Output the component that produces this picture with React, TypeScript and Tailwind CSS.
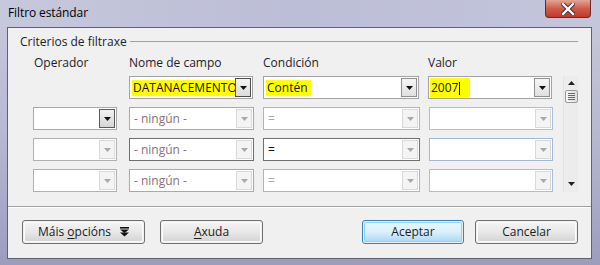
import React from "react";

type BtnKind = "light" | "dark" | "focus" | "normal";

function Arrow({ color }: { color: string }) {
  return (
    <svg width="7" height="4" viewBox="0 0 7 4">
      <path d="M0 0 H7 L3.5 4 Z" fill={color} />
    </svg>
  );
}

function Combo({
  w,
  border,
  btn,
  children,
}: {
  w: string;
  border: string;
  btn: BtnKind;
  children?: React.ReactNode;
}) {
  const btnCls =
    btn === "dark"
      ? "border-[#5b5b5b] bg-gradient-to-b from-[#f2f2f2] to-[#d6d6d6]"
      : btn === "focus"
      ? "border-[#4d4d4d] bg-gradient-to-b from-[#f4f4f4] to-[#dcdcdc]"
      : btn === "normal"
      ? "border-[#8e8f8f] bg-gradient-to-b from-[#f6f6f6] to-[#e0e0e0]"
      : "border-[#d9d9d9] bg-[#f4f4f4]";
  const arrowColor = btn === "light" ? "#a8a8a8" : "#111111";
  return (
    <div className={`${w} h-[23px] bg-white border ${border} flex items-stretch p-[1px]`}>
      <div className="flex-1 min-w-0 overflow-hidden flex items-center pl-[1px] whitespace-nowrap">
        {children}
      </div>
      <div className={`w-[16px] border flex items-center justify-center ${btnCls}`}>
        <Arrow color={arrowColor} />
      </div>
    </div>
  );
}

function WinButton({
  w,
  children,
  def,
}: {
  w: string;
  children: React.ReactNode;
  def?: boolean;
}) {
  return (
    <div
      className={`${w} h-[24px] rounded-[3px] border ${
        def ? "border-[#3c7fb1]" : "border-[#707070]"
      } p-[1px]`}
    >
      <div
        className={`w-full h-full rounded-[2px] flex items-center justify-center text-[12px] text-[#1a1a1a] ${
          def
            ? "bg-gradient-to-b from-[#eaf6fd] via-[#d9f0fc] to-[#a7d9f5] shadow-[inset_0_0_0_1px_#8ed3f7]"
            : "bg-gradient-to-b from-[#f4f4f4] via-[#e8e8e8] to-[#d3d3d3] shadow-[inset_0_0_0_1px_#fbfbfb]"
        }`}
      >
        {children}
      </div>
    </div>
  );
}

const ningun = <span className="text-[#86707c] text-[12px] pl-[2px]">- ningún -</span>;

export default function App() {
  return (
    <div
      className="w-[600px] h-[265px] flex flex-col bg-gradient-to-b from-[#c9cade] via-[#b7b8d2] to-[#9c9dbd] overflow-hidden"
      style={{ fontFamily: '"Open Sans", "Noto Sans", sans-serif' }}
    >
      {/* Title bar */}
      <div className="h-[27px] flex justify-between items-start shrink-0 bg-gradient-to-r from-[#c6c8dc] via-[#bcbdd6] to-[#c4c6dc]">
        <div className="pl-[8px] pt-[4px] text-[12px] text-black tracking-[-0.1px]">
          Filtro estándar
        </div>
        <div className="mr-[9px] w-[46px] h-[18px] rounded-b-[4px] border border-t-0 border-[#6b2a24] bg-gradient-to-b from-[#e3a493] via-[#cf5b4a] to-[#c0392b] flex items-center justify-center">
          <svg width="14" height="12" viewBox="0 0 14 12">
            <path
              d="M2 1 L12 11 M12 1 L2 11"
              stroke="#3a2a2a"
              strokeWidth="4.2"
              strokeLinecap="square"
            />
            <path
              d="M2 1 L12 11 M12 1 L2 11"
              stroke="#ffffff"
              strokeWidth="2.4"
              strokeLinecap="square"
            />
          </svg>
        </div>
      </div>

      {/* Client area */}
      <div className="ml-[7px] mr-[8px] h-[232px] border border-[#5f6275] bg-[#f0f0f0] flex flex-col text-[#1c1c2c]">
        {/* group header */}
        <div className="flex items-center h-[15px] mt-[6px] pl-[12px] pr-[13px]">
          <span className="text-[12px] leading-none">Criterios de filtraxe</span>
          <div className="flex-1 ml-[3px] h-[2px] border-t border-[#a0a0a0] border-b-white" />
        </div>

        {/* headers */}
        <div className="flex text-[12px] mt-[5px] h-[18px] items-center">
          <span className="ml-[26px] w-[95px]">Operador</span>
          <span className="w-[134px]">Nome de campo</span>
          <span className="w-[165px]">Condición</span>
          <span>Valor</span>
        </div>

        {/* rows + scrollbar */}
        <div className="flex mt-[4px]">
          <div className="flex flex-col gap-[8px] ml-[25px]">
            <div className="flex">
              <div className="w-[84px]" />
              <div className="ml-[12px]">
                <Combo w="w-[124px]" border="border-[#a3a3a3]" btn="focus">
                  <span className="bg-[#ffff00] text-[12px] text-[#2a0a00] h-[16px] leading-[16px] pl-[1px] pr-[3px]">
                    DATANACEMENTO
                  </span>
                </Combo>
              </div>
              <div className="ml-[10px]">
                <Combo w="w-[156px]" border="border-[#a3a3a3]" btn="normal">
                  <span className="bg-[#ffff00] text-[12px] text-[#1a1400] h-[16px] leading-[16px] pl-[1px] pr-[3px]">
                    Contén
                  </span>
                </Combo>
              </div>
              <div className="ml-[9px]">
                <Combo w="w-[124px]" border="border-[#a3a3a3]" btn="normal">
                  <span className="bg-[#ffff00] text-[12px] text-[#1a1400] h-[20px] leading-[20px] -ml-[3px] pl-[3px] pr-[10px]">
                    2007<span className="inline-block w-[1px] h-[13px] bg-black align-middle ml-[1px]" />
                  </span>
                </Combo>
              </div>
            </div>

            <div className="flex">
              <Combo w="w-[84px]" border="border-[#a9a9a9]" btn="dark" />
              <div className="ml-[12px]">
                <Combo w="w-[125px]" border="border-[#a9a9a9]" btn="light">
                  {ningun}
                </Combo>
              </div>
              <div className="ml-[9px]">
                <Combo w="w-[157px]" border="border-[#b4b4b4]" btn="light">
                  <span className="text-[12px] text-[#a6a6a6] pl-[2px]">=</span>
                </Combo>
              </div>
              <div className="ml-[9px]">
                <Combo w="w-[124px]" border="border-[#a9bfdc]" btn="light" />
              </div>
            </div>

            <div className="flex">
              <Combo w="w-[84px]" border="border-[#b0b0b0]" btn="light" />
              <div className="ml-[12px]">
                <Combo w="w-[125px]" border="border-[#6f6f6f]" btn="light">
                  {ningun}
                </Combo>
              </div>
              <div className="ml-[9px]">
                <Combo w="w-[157px]" border="border-[#6f6f6f]" btn="light">
                  <span className="text-[12px] text-[#111111] pl-[2px]">=</span>
                </Combo>
              </div>
              <div className="ml-[9px]">
                <Combo w="w-[124px]" border="border-[#a3b8d6]" btn="light" />
              </div>
            </div>

            <div className="flex">
              <Combo w="w-[84px]" border="border-[#b0b0b0]" btn="light" />
              <div className="ml-[12px]">
                <Combo w="w-[125px]" border="border-[#a9a9a9]" btn="light">
                  {ningun}
                </Combo>
              </div>
              <div className="ml-[9px]">
                <Combo w="w-[157px]" border="border-[#b4b4b4]" btn="light">
                  <span className="text-[12px] text-[#a6a6a6] pl-[2px]">=</span>
                </Combo>
              </div>
              <div className="ml-[9px]">
                <Combo w="w-[124px]" border="border-[#a9bfdc]" btn="light" />
              </div>
            </div>
          </div>

          {/* scrollbar */}
          <div className="ml-[10px] w-[15px] h-[116px] bg-[#ececec] border-l border-[#e4e4e4] flex flex-col items-center">
            <div className="h-[14px] flex items-center justify-center">
              <svg width="7" height="4" viewBox="0 0 7 4">
                <path d="M0 4 H7 L3.5 0 Z" fill="#222" />
              </svg>
            </div>
            <div className="w-[13px] h-[13px] border border-[#9a9a9a] rounded-[2px] bg-gradient-to-r from-[#f6f6f6] to-[#dedede] flex flex-col items-center justify-center gap-[1px]">
              <div className="w-[7px] h-[1px] bg-[#6a6a6a]" />
              <div className="w-[7px] h-[1px] bg-[#6a6a6a]" />
              <div className="w-[7px] h-[1px] bg-[#6a6a6a]" />
              <div className="w-[7px] h-[1px] bg-[#6a6a6a]" />
            </div>
            <div className="flex-1" />
            <div className="h-[16px] flex items-center justify-center">
              <svg width="7" height="4" viewBox="0 0 7 4">
                <path d="M0 0 H7 L3.5 4 Z" fill="#222" />
              </svg>
            </div>
          </div>
        </div>

        {/* separator */}
        <div className="mt-[14px] h-[2px] border-t border-[#a0a0a0] border-b border-b-white" />

        {/* buttons */}
        <div className="flex mt-[12px] pl-[14px]">
          <WinButton w="w-[123px]">
            <span>
              Máis <span className="underline underline-offset-2">o</span>pcións
            </span>
            <svg className="ml-[9px]" width="9" height="10" viewBox="0 0 9 10">
              <rect x="0" y="0" width="9" height="1.6" fill="#111" />
              <path d="M0 2.5 H9 L4.5 6 Z" fill="#111" />
              <path d="M0 5.5 H9 L4.5 9.5 Z" fill="#111" />
            </svg>
          </WinButton>
          <div className="ml-[15px]">
            <WinButton w="w-[103px]">
              <span>
                <span className="underline underline-offset-2">A</span>xuda
              </span>
            </WinButton>
          </div>
          <div className="ml-[99px]">
            <WinButton w="w-[102px]" def>
              Aceptar
            </WinButton>
          </div>
          <div className="ml-[11px]">
            <WinButton w="w-[103px]">Cancelar</WinButton>
          </div>
        </div>
      </div>
    </div>
  );
}
